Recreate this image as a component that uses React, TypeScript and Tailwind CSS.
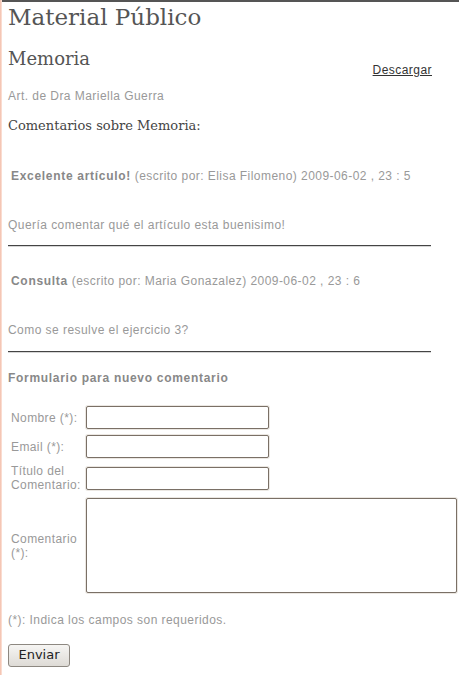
import React from "react";

const sans = { fontFamily: '"Liberation Sans", Arial, sans-serif' };
const serif = { fontFamily: '"DejaVu Serif", Georgia, serif' };

function Rule() {
  return <div className="w-[423px] h-[2px] border-t border-t-[#444] border-b border-b-[#d6d6d6]" />;
}

function Field({ label, children }: { label: React.ReactNode; children: React.ReactNode }) {
  return (
    <div className="flex items-center py-[3px]">
      <div className="w-[75px] pl-[3px] text-[12px] leading-[14px] tracking-[0.4px] text-[#999]">{label}</div>
      <div className="ml-[3px] flex">{children}</div>
    </div>
  );
}

const inputCls =
  "block bg-white border border-[#7a7066] rounded-[2px] shadow-[0_0_0_1px_#ebe7e2] outline-none";

export default function App() {
  return (
    <div className="flex min-h-[675px] w-[459px] bg-white overflow-hidden" style={sans}>
      <div className="w-[2px] shrink-0 bg-gradient-to-r from-[#f2bca8] to-[#fce6dd]" />
      <div className="flex flex-col flex-1 min-w-0">
        <div className="h-[2px] bg-[#555]" />
        <div className="flex flex-col pl-[6px]">
          <h1 className="text-[23px] leading-[30px] text-[#555] font-normal" style={serif}>
            Material Público
          </h1>
          <div className="mt-[14px] w-[424px] flex justify-between items-start">
            <h2 className="text-[18px] leading-[26px] text-[#555] font-normal" style={serif}>
              Memoria
            </h2>
            <a href="#" className="mt-[16px] text-[12px] leading-[16px] tracking-[0.45px] text-[#333] underline">
              Descargar
            </a>
          </div>
          <p className="mt-[10px] text-[12px] leading-[16px] tracking-[0.45px] text-[#999]">
            Art. de Dra Mariella Guerra
          </p>
          <h3 className="mt-[12px] text-[13px] leading-[20px] text-[#444] font-normal" style={serif}>
            Comentarios sobre Memoria:
          </h3>

          <p className="mt-[32px] pl-[3px] text-[12px] leading-[16px] tracking-[0.45px] text-[#999]">
            <b className="text-[#888] tracking-[0.7px]">Excelente artículo!</b> (escrito por: Elisa Filomeno)
            2009-06-02 , 23 : 5
          </p>
          <p className="mt-[33px] text-[12px] leading-[16px] tracking-[0.45px] text-[#999]">
            Quería comentar qué el artículo esta buenisimo!
          </p>
          <div className="mt-[12px]">
            <Rule />
          </div>

          <p className="mt-[26px] pl-[3px] text-[12px] leading-[16px] tracking-[0.45px] text-[#999]">
            <b className="text-[#888] tracking-[0.7px]">Consulta</b> (escrito por: Maria Gonazalez) 2009-06-02 , 23
            : 6
          </p>
          <p className="mt-[33px] text-[12px] leading-[16px] tracking-[0.45px] text-[#999]">
            Como se resulve el ejercicio 3?
          </p>
          <div className="mt-[13px]">
            <Rule />
          </div>

          <p className="mt-[17px] text-[12px] leading-[16px] tracking-[0.7px] font-bold text-[#888]">
            Formulario para nuevo comentario
          </p>

          <div className="mt-[17px] flex flex-col">
            <Field label="Nombre (*):">
              <input className={`${inputCls} w-[183px] h-[23px]`} />
            </Field>
            <Field label="Email (*):">
              <input className={`${inputCls} w-[183px] h-[23px]`} />
            </Field>
            <Field label="Título del Comentario:">
              <input className={`${inputCls} w-[183px] h-[23px]`} />
            </Field>
            <Field label="Comentario (*):">
              <textarea className={`${inputCls} w-[371px] h-[95px] resize-none`} />
            </Field>
          </div>

          <p className="mt-[16px] text-[12px] leading-[16px] tracking-[0.45px] text-[#999]">
            (*): Indica los campos son requeridos.
          </p>
          <div className="mt-[14px] mb-[8px]">
            <button
              className="w-[62px] h-[23px] rounded-[3px] border border-[#8d8881] bg-gradient-to-b from-[#f6f5f3] to-[#dedbd6] text-[13px] text-[#222] leading-[20px]"
              style={{ fontFamily: '"DejaVu Sans", sans-serif' }}
            >
              Enviar
            </button>
          </div>
        </div>
      </div>
    </div>
  );
}
